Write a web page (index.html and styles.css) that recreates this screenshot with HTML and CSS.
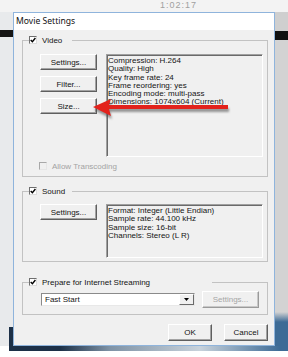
FILE: index.html
```html
<!DOCTYPE html>
<html lang="en">
<head>
  <meta charset="UTF-8">
  <title>Movie Settings</title>
  <link rel="stylesheet" href="styles.css">
</head>
<body>
  <div class="desktop">
    <div class="top-strip"><span class="clock">1:02:17</span></div>

    <div class="middle">
      <div class="side side-left"></div>

      <div class="dialog">
        <div class="titlebar">Movie Settings</div>

        <div class="dialog-body">
          <!-- Video -->
          <fieldset class="group">
            <legend class="legend legend-short">
              <span class="check"><svg viewBox="0 0 6 6"><path d="M0.7 3 L2.4 4.7 L5.4 1"/></svg></span>
              Video
            </legend>
            <div class="group-content video-content">
              <div class="group-row">
                <div class="button-col">
                  <button class="btn">Settings...</button>
                  <button class="btn">Filter...</button>
                  <button class="btn">Size...</button>
                </div>
                <div class="info info-video">
                  <div>Compression: H.264</div>
                  <div>Quality: High</div>
                  <div>Key frame rate: 24</div>
                  <div>Frame reordering: yes</div>
                  <div>Encoding mode: multi-pass</div>
                  <div>Dimensions: 1074x604 (Current)</div>
                </div>
              </div>
              <div class="option disabled">
                <span class="check"></span>
                Allow Transcoding
              </div>
            </div>
          </fieldset>

          <!-- Sound -->
          <fieldset class="group group-sound">
            <legend class="legend legend-short">
              <span class="check"><svg viewBox="0 0 6 6"><path d="M0.7 3 L2.4 4.7 L5.4 1"/></svg></span>
              Sound
            </legend>
            <div class="group-content sound-content">
              <div class="group-row">
                <div class="button-col">
                  <button class="btn">Settings...</button>
                </div>
                <div class="info info-sound">
                  <div>Format: Integer (Little Endian)</div>
                  <div>Sample rate: 44.100 kHz</div>
                  <div>Sample size: 16-bit</div>
                  <div>Channels: Stereo (L R)</div>
                </div>
              </div>
            </div>
          </fieldset>

          <!-- Streaming -->
          <fieldset class="group group-stream">
            <legend class="legend legend-long">
              <span class="check"><svg viewBox="0 0 6 6"><path d="M0.7 3 L2.4 4.7 L5.4 1"/></svg></span>
              Prepare for Internet Streaming
            </legend>
            <div class="group-content stream-content">
              <div class="combo">
                <span>Fast Start</span>
                <span class="combo-btn"><svg viewBox="0 0 5 3"><path d="M0 0 L5 0 L2.5 3 Z"/></svg></span>
              </div>
              <button class="btn btn-disabled">Settings...</button>
            </div>
          </fieldset>

          <div class="dialog-buttons">
            <button class="btn btn-action">OK</button>
            <button class="btn btn-action">Cancel</button>
          </div>

          <!-- red annotation arrow pointing at Size... -->
          <svg class="arrow" width="150" height="24" viewBox="0 0 150 24">
            <defs>
              <filter id="soft"><feGaussianBlur stdDeviation="1"/></filter>
            </defs>
            <path d="M4 13 L22 5 L20 11 L139 11 L139 15 L20 15 L22 22 Z" fill="#4a4a4a" opacity="0.55" filter="url(#soft)"/>
            <path d="M3 10 L21 2 L19 8 L138 8 L138 12 L19 12 L21 19 Z" fill="#e3221c"/>
          </svg>
        </div>
      </div>

      <div class="side side-right"></div>
    </div>

    <div class="bottom-strip"></div>
  </div>
</body>
</html>
```

FILE: styles.css
```css
* {
  box-sizing: border-box;
}

body {
  margin: 0;
  background: #fff;
  font-family: "Liberation Sans", Arial, sans-serif;
  font-size: 8px;
  color: #141414;
}

.desktop {
  width: 288px;
  height: 357px;
  display: flex;
  flex-direction: column;
  overflow: hidden;
}

/* bits of the desktop around the dialog */
.top-strip {
  height: 12px;
  background: #f3f3f3;
  padding-left: 160px;
}

.clock {
  display: block;
  font-size: 9px;
  line-height: 10px;
  letter-spacing: 1px;
  color: #a0a0a0;
}

.middle {
  display: flex;
  height: 334px;
}

.side {
  width: 13px;
}

.side-left {
  background:
    linear-gradient(90deg, transparent 0 9px, #1c3047 9px) 0 315px / 13px 19px no-repeat,
    linear-gradient(#e8eaec 0 18px, #151515 18px 25px, #e8eaec 25px);
}

.side-right {
  background: linear-gradient(#cfcfcf 0 19px, #111 19px 28px, #d3d3d3 28px 300px, #3d6b96 310px);
}

.bottom-strip {
  height: 11px;
  background:
    linear-gradient(90deg, #fff 0 9px, #1c3047 9px 60px, #7f93a6 110px, #c8d2db 200px, #3d6b96 280px) 0 0 / 100% 5px no-repeat,
    #fff;
}

/* dialog window */
.dialog {
  width: 262px;
  height: 334px;
  display: flex;
  flex-direction: column;
  border: 1px solid #8fb4dc;
  background: #f0f0f0;
}

.titlebar {
  height: 17px;
  line-height: 17px;
  padding-left: 2px;
  background: #fff;
  font-family: "Noto Sans", "Liberation Sans", sans-serif;
  font-size: 8.6px;
  color: #111;
}

.dialog-body {
  position: relative;
  flex: 1;
  padding: 5px 6px 0 8px;
}

/* group boxes */
.group {
  margin: 0;
  padding: 0;
  min-width: 0;
  border: 1px solid #c2c2c2;
}

.group-sound {
  margin-top: 9px;
}

.group-stream {
  margin-top: 15px;
}

.legend {
  display: flex;
  align-items: center;
  height: 10px;
  padding: 0;
  margin-left: 6px;
  font-size: 8px;
  white-space: nowrap;
}

.legend-short {
  width: 43px;
}

.legend-long {
  width: 183px;
}

.check {
  display: inline-flex;
  align-items: center;
  justify-content: center;
  width: 8px;
  height: 8px;
  margin-right: 5px;
  border: 1px solid;
  border-color: #6e6e6e #dcdcdc #dcdcdc #6e6e6e;
  background: #fff;
}

.check svg {
  width: 6px;
  height: 6px;
  display: block;
}

.check path {
  fill: none;
  stroke: #000;
  stroke-width: 1.4;
}

.video-content {
  padding: 9px 0 6px 16px;
}

.sound-content {
  padding: 8px 0 3px 16px;
}

.stream-content {
  display: flex;
  align-items: center;
  gap: 7px;
  padding: 4px 0 6px 18px;
}

.group-row {
  display: flex;
  gap: 9px;
  padding-left: 1px;
}

.button-col {
  display: flex;
  flex-direction: column;
  gap: 6px;
}

/* classic raised button */
.btn {
  font: inherit;
  color: #141414;
  padding: 0;
  width: 57px;
  height: 16px;
  background: #f0f0f0;
  border: 1px solid;
  border-color: #fff #5f5f5f #5f5f5f #fff;
  box-shadow: inset -1px -1px #a3a3a3;
}

.btn-disabled {
  height: 17px;
  color: #a6a6a6;
  border-color: #fff #9a9a9a #9a9a9a #fff;
  box-shadow: inset -1px -1px #c8c8c8;
}

.btn-action {
  width: 44px;
  height: 17px;
}

/* read-only summary boxes */
.info {
  width: 157px;
  padding: 2px 0 0 1px;
  line-height: 8.3px;
  background: #f0f0f0;
  border: 1px solid;
  border-color: #a0a0a0 #fff #fff #a0a0a0;
  box-shadow: inset 1px 1px #6a6a6a;
  white-space: nowrap;
  overflow: hidden;
}

.info-video {
  height: 103px;
}

.info-sound {
  height: 54px;
}

.option {
  display: flex;
  align-items: center;
  height: 8px;
  margin-top: 5px;
}

.option.disabled {
  color: #a3a3a3;
}

.option.disabled .check {
  background: #f0f0f0;
  border-color: #a8a8a8 #e6e6e6 #e6e6e6 #a8a8a8;
}

/* streaming row */
.combo {
  display: flex;
  align-items: center;
  justify-content: space-between;
  width: 154px;
  height: 13px;
  padding-left: 3px;
  background: #fff;
  border: 1px solid;
  border-color: #8a8a8a #e8e8e8 #e8e8e8 #8a8a8a;
}

.combo-btn {
  display: flex;
  align-items: center;
  justify-content: center;
  width: 15px;
  height: 100%;
  background: #f0f0f0;
  border: 1px solid;
  border-color: #fff #6a6a6a #6a6a6a #fff;
}

.combo-btn svg {
  width: 5px;
  height: 3px;
  fill: #000;
}

.dialog-buttons {
  display: flex;
  justify-content: flex-end;
  gap: 12px;
  margin-top: 9px;
}

.arrow {
  position: absolute;
  left: 76px;
  top: 67px;
}
```
